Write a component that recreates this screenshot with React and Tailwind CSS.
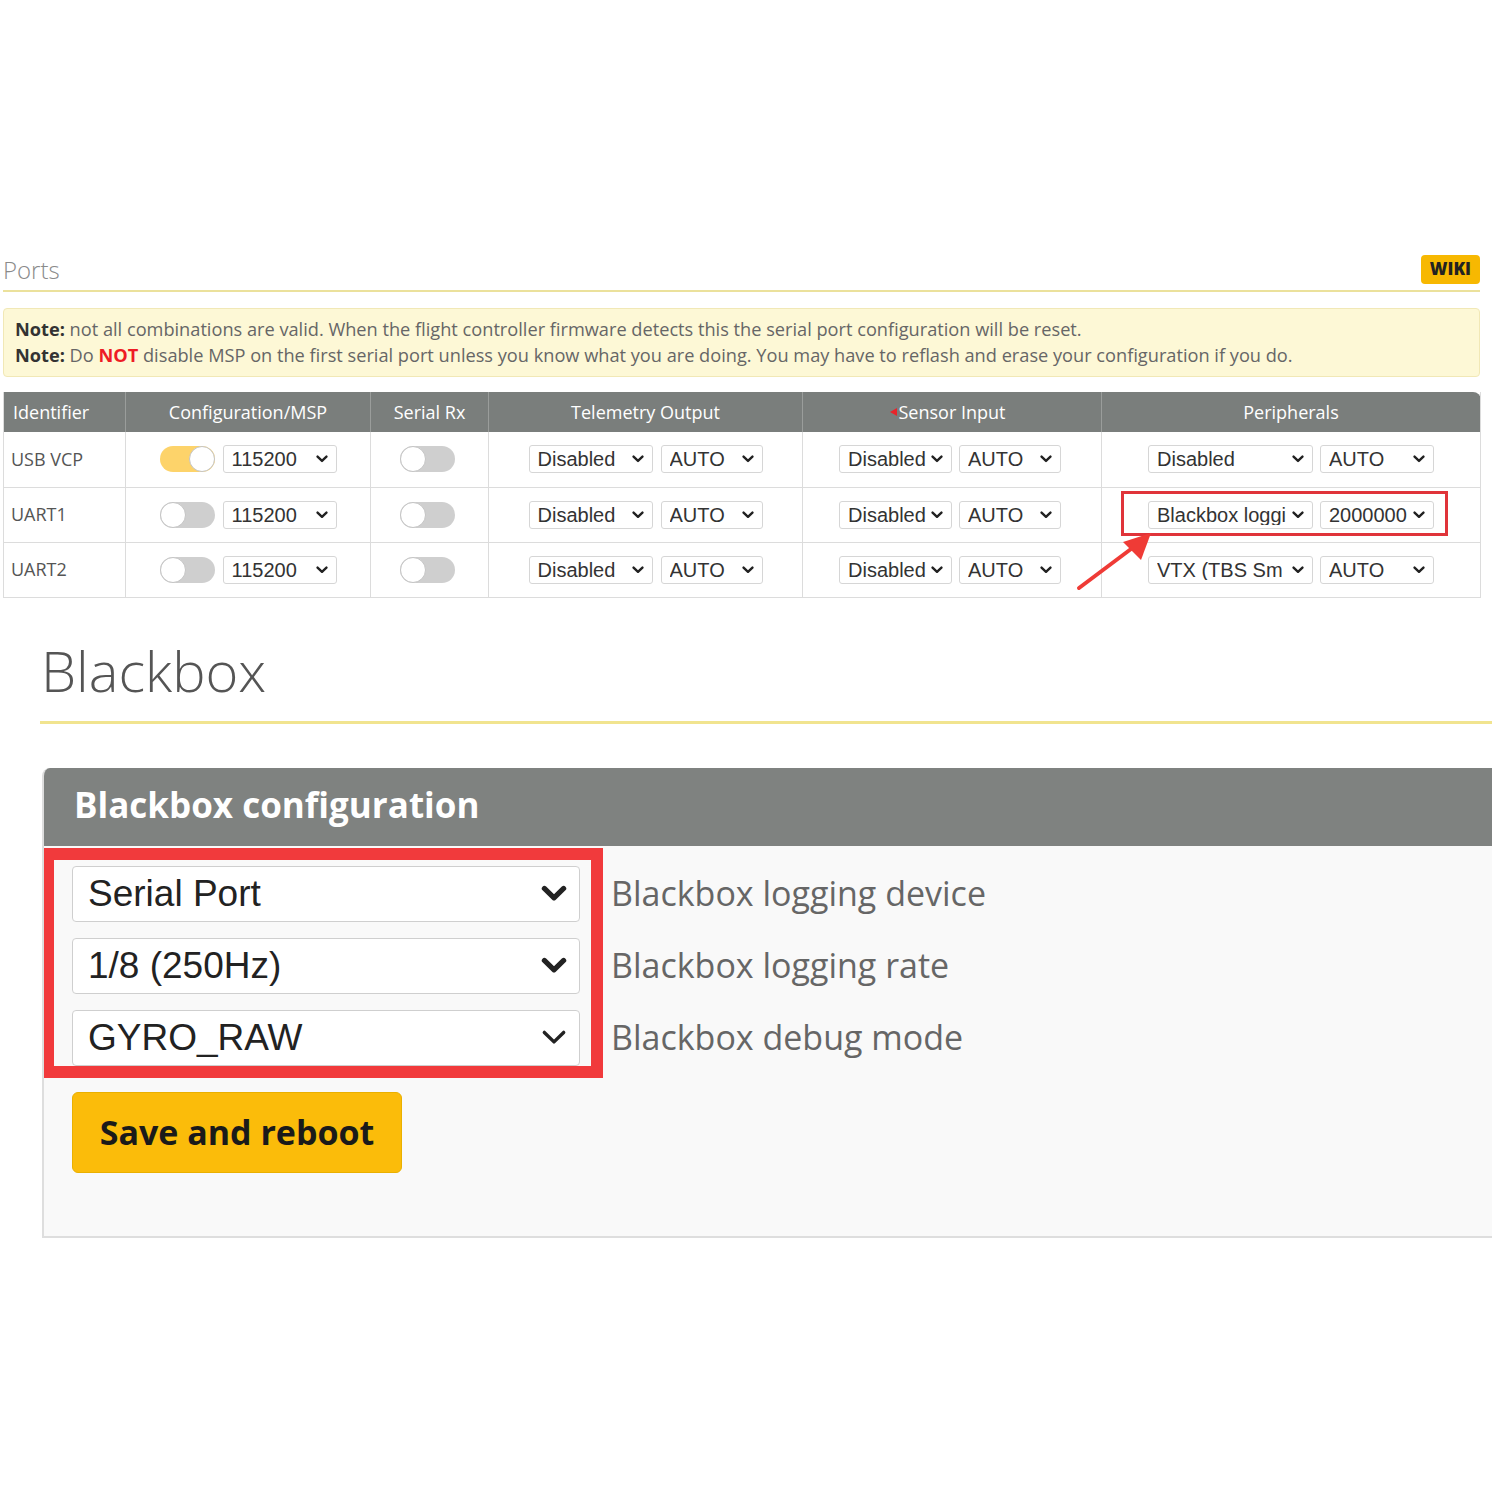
import React from 'react';

const OS = "font-['Open_Sans',sans-serif]";
const AR = "font-['Liberation_Sans',Arial,sans-serif]";

function Chevron({ size = 12, stroke = 2.4, className = '' }) {
  return (
    <svg width={size} height={size * 0.66} viewBox="0 0 12 8" className={className}>
      <path d="M1.5 1.6 L6 6 L10.5 1.6" fill="none" stroke="#222" strokeWidth={stroke} strokeLinecap="round" strokeLinejoin="round" />
    </svg>
  );
}

function Sel({ text, w }) {
  return (
    <div
      className={`${AR} flex items-center justify-between h-[28px] bg-white border border-[#d6d6d6] rounded-[3px] pl-[8px] pr-[8px] text-[20px] text-[#333] leading-none overflow-hidden whitespace-nowrap`}
      style={{ width: w }}
    >
      <span className="overflow-hidden">{text}</span>
      <Chevron size={12} className="shrink-0 ml-1" />
    </div>
  );
}

function Toggle({ on }) {
  return (
    <div className={`relative w-[55px] h-[26px] rounded-full ${on ? 'bg-[#fdd36a]' : 'bg-[#cfcfcf]'}`}>
      <div
        className={`absolute top-0 w-[26px] h-[26px] rounded-full bg-white border border-[#c4c4c4] ${on ? 'right-0' : 'left-0'}`}
      />
    </div>
  );
}

const ROWS = [
  { id: 'USB VCP', msp: true, periph: 'Disabled', periphRate: 'AUTO' },
  { id: 'UART1', msp: false, periph: 'Blackbox loggi', periphRate: '2000000' },
  { id: 'UART2', msp: false, periph: 'VTX (TBS Sm', periphRate: 'AUTO' },
];

function PortsTable() {
  const th = `${OS} h-[40px] text-white text-[18px] font-normal border-r border-[#9a9d9b] last:border-r-0`;
  const td = 'h-[55px] border-r border-b border-[#dcdcdc] last:border-r-0';
  return (
    <div className="relative">
      <table className="w-[1477px] border-collapse table-fixed bg-white border-l border-r border-b border-[#dcdcdc]">
        <colgroup>
          <col className="w-[122px]" />
          <col className="w-[245px]" />
          <col className="w-[118px]" />
          <col className="w-[314px]" />
          <col className="w-[299px]" />
          <col className="w-[379px]" />
        </colgroup>
        <thead>
          <tr className="bg-[#7a7e7c]">
            <th className={`${th} text-left pl-[9px]`}>Identifier</th>
            <th className={th}>Configuration/MSP</th>
            <th className={th}>Serial Rx</th>
            <th className={th}>Telemetry Output</th>
            <th className={th}>
              <span className="relative">
                <span className="absolute left-[-9px] top-[8px] w-0 h-0 border-y-[4px] border-y-transparent border-r-[7px] border-r-[#e8242a]" />
                Sensor Input
              </span>
            </th>
            <th className={`${th} rounded-tr-[8px]`}>Peripherals</th>
          </tr>
        </thead>
        <tbody>
          {ROWS.map((r) => (
            <tr key={r.id}>
              <td className={`${td} ${OS} text-[18px] text-[#555] pl-[7px]`}>{r.id}</td>
              <td className={td}>
                <div className="flex items-center justify-center gap-[8px]">
                  <Toggle on={r.msp} />
                  <Sel text="115200" w={114} />
                </div>
              </td>
              <td className={td}>
                <div className="flex justify-center pr-[4px]">
                  <Toggle on={false} />
                </div>
              </td>
              <td className={td}>
                <div className="flex items-center justify-center gap-[8px]">
                  <Sel text="Disabled" w={124} />
                  <Sel text="AUTO" w={102} />
                </div>
              </td>
              <td className={td}>
                <div className="flex items-center justify-center gap-[7px] pr-[4px]">
                  <Sel text="Disabled" w={113} />
                  <Sel text="AUTO" w={102} />
                </div>
              </td>
              <td className={td}>
                <div className="flex items-center justify-center gap-[7px]">
                  <Sel text={r.periph} w={165} />
                  <Sel text={r.periphRate} w={114} />
                </div>
              </td>
            </tr>
          ))}
        </tbody>
      </table>

      {/* red annotation box around UART1 peripherals */}
      <div className="absolute left-[1118px] top-[99px] w-[327px] h-[45px] border-[3px] border-[#e0343a]" />
      {/* red arrow */}
      <svg className="absolute left-[1070px] top-[138px]" width="90" height="70" viewBox="0 0 90 70">
        <path d="M6 58 L62 16" stroke="#ef3b36" strokeWidth="4" strokeLinecap="round" />
        <path d="M78 3 L50 12 L68 30 Z" fill="#ef3b36" />
      </svg>
    </div>
  );
}

function BbSelect({ text, clip }) {
  return (
    <div
      className={`${AR} flex items-center justify-between w-[508px] h-[56px] bg-white border border-[#cfcfcf] rounded-[4px] pl-[15px] pr-[12px] text-[37px] text-[#222] leading-none`}
    >
      <span>{text}</span>
      <Chevron size={26} stroke={clip ? 1.6 : 2.4} />
    </div>
  );
}

const BB_ROWS = [
  { value: 'Serial Port', label: 'Blackbox logging device' },
  { value: '1/8 (250Hz)', label: 'Blackbox logging rate' },
  { value: 'GYRO_RAW', label: 'Blackbox debug mode', clip: true },
];

export default function App() {
  return (
    <div className="w-[1492px] h-[1492px] bg-white overflow-hidden">
      {/* Ports */}
      <div className="ml-[3px] w-[1477px] pt-[254px]">
        <div className="flex items-center justify-between h-[38px] border-b-2 border-[#ebe19c]">
          <span className={`${OS} text-[24px] text-[#8a8a8a] font-light pb-[4px]`}>Ports</span>
          <span className={`${OS} mr-0 mb-[6px] px-[9px] h-[29px] flex items-center rounded-[4px] bg-[#f7b801] text-[17px] font-extrabold text-[#222]`}>
            WIKI
          </span>
        </div>

        <div className={`${OS} mt-[16px] h-[69px] rounded-[4px] bg-[#fdf8d6] border border-[#f1e8b6] px-[11px] pt-[7px] text-[18.2px] leading-[26px] text-[#666]`}>
          <div>
            <b className="text-[#333]">Note:</b> not all combinations are valid. When the flight controller firmware detects this the serial port configuration will be reset.
          </div>
          <div>
            <b className="text-[#333]">Note:</b> Do <b className="text-[#ee1c25]">NOT</b> disable MSP on the first serial port unless you know what you are doing. You may have to reflash and erase your configuration if you do.
          </div>
        </div>

        <div className="mt-[15px]">
          <PortsTable />
        </div>
      </div>

      {/* Blackbox */}
      <div className="ml-[40px] mt-[26px]">
        <div className="h-[100px] border-b-[3px] border-[#f1e48f] pl-[1px] pt-[9px]">
          <h1 className={`${OS} text-[56px] font-light text-[#555] leading-[74px]`}>Blackbox</h1>
        </div>

        <div className="mt-[44px] ml-[2px] relative rounded-tl-[8px] border-l-2 border-b-2 border-[#dedede] bg-[#f9f9f9] h-[470px] overflow-hidden">
          <div className="h-[78px] bg-[#7f8280] flex items-center pl-[30px]">
            <span className={`${OS} text-[35px] font-bold text-white pb-[2px]`}>Blackbox configuration</span>
          </div>

          <div className="pl-[28px] pt-[20px]">
            <div className="flex flex-col gap-[16px]">
              {BB_ROWS.map((r) => (
                <div key={r.label} className="flex items-center gap-[31px]">
                  <BbSelect text={r.value} clip={r.clip} />
                  <span className={`${OS} text-[34px] text-[#666]`}>{r.label}</span>
                </div>
              ))}
            </div>

            <button className={`${OS} mt-[26px] w-[330px] h-[81px] rounded-[6px] bg-[#fbbc0a] border border-[#eab000] text-[34px] font-bold text-[#1a1a1a]`}>
              Save and reboot
            </button>
          </div>

          {/* red annotation box around the selects */}
          <div className="absolute left-[-2px] top-[80px] w-[561px] h-[230px] border-[12px] border-[#f13a3c]" />
        </div>
      </div>
    </div>
  );
}
